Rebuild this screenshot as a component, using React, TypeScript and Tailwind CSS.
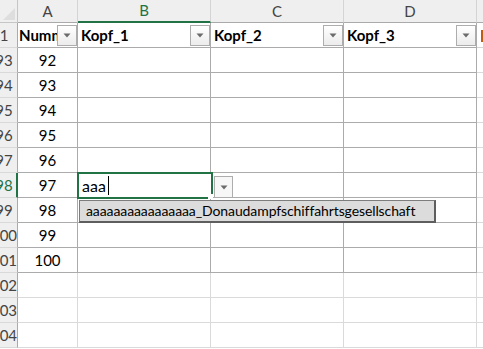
import React from 'react';

const cols = [
  { key: 'A', w: 'w-[60px]' },
  { key: 'B', w: 'w-[133px]' },
  { key: 'C', w: 'w-[133px]' },
  { key: 'D', w: 'w-[133px]' },
];

const rows = [
  { label: '93', val: '92' },
  { label: '94', val: '93' },
  { label: '95', val: '94' },
  { label: '96', val: '95' },
  { label: '97', val: '96' },
  { label: '98', val: '97' },
  { label: '99', val: '98' },
  { label: '100', val: '99' },
  { label: '101', val: '100' },
  { label: '102', val: '' },
  { label: '103', val: '' },
  { label: '104', val: '' },
];

const Caret = () => (
  <svg width="8" height="5" viewBox="0 0 8 5">
    <path d="M0.5 0.5 L7.5 0.5 L4 4.5 Z" fill="#6b6b6b" />
  </svg>
);

const FilterButton = () => (
  <div className="absolute right-0 top-[2px] w-[20px] h-[21px] border border-[#adadad] bg-gradient-to-b from-white to-[#ececec] flex items-center justify-center">
    <Caret />
  </div>
);

const RowHead = ({ label, active }: { label: string; active?: boolean }) => (
  <div
    className={
      'w-[18px] shrink-0 overflow-hidden flex items-center bg-[#efefef] border-b border-[#d9d9d9] ' +
      (active ? 'border-r-2 border-r-[#217346] text-[#217346] bg-[#e2e2e2]' : 'border-r border-r-[#aaaaaa] text-[#444]')
    }
  >
    <div className="w-[28px] shrink-0 ml-[-10px] text-center">{label}</div>
  </div>
);

export default function App() {
  return (
    <div
      className="relative w-[483px] h-[349px] overflow-hidden bg-white text-[15px] leading-none text-black"
      style={{ fontFamily: 'Lato, "Liberation Sans", sans-serif' }}
    >
      {/* column headers */}
      <div className="flex h-[23px]">
        <div className="w-[18px] shrink-0 bg-[#efefef] border-r border-b border-[#c6c6c6] relative overflow-hidden">
          <svg className="absolute right-[2px] bottom-[2px]" width="12" height="12" viewBox="0 0 12 12">
            <path d="M12 0 L12 12 L0 12 Z" fill="#dedede" />
          </svg>
        </div>
        {cols.map((c) => (
          <div
            key={c.key}
            className={
              c.w +
              ' shrink-0 bg-[#efefef] border-r border-r-[#d4d4d4] flex items-center justify-center ' +
              (c.key === 'B'
                ? 'border-b-2 border-b-[#217346] text-[#217346] bg-[#e4e4e4]'
                : 'border-b border-b-[#aaaaaa] text-[#444]')
            }
          >
            {c.key}
          </div>
        ))}
        <div className="flex-1 bg-[#efefef] border-b border-[#aaaaaa]" />
      </div>

      {/* table header row */}
      <div className="flex h-[25px]">
        <RowHead label="1" />
        {[
          { w: 'w-[60px]', t: 'Nummer', pl: 'pl-[1px]' },
          { w: 'w-[133px]', t: 'Kopf_1', pl: 'pl-[3px]' },
          { w: 'w-[133px]', t: 'Kopf_2', pl: 'pl-[3px]' },
          { w: 'w-[133px]', t: 'Kopf_3', pl: 'pl-[3px]' },
        ].map((h) => (
          <div
            key={h.t}
            className={h.w + ' shrink-0 relative border-r border-b border-[#ababab] font-bold flex items-center overflow-hidden ' + h.pl}
          >
            <span className="whitespace-nowrap">{h.t}</span>
            <FilterButton />
          </div>
        ))}
        <div className="flex-1 border-b border-[#d4d4d4] relative">
          <div className="absolute left-[4px] top-[7px] w-[3px] h-[12px] bg-[#c55a11]" />
        </div>
      </div>

      {/* data rows */}
      {rows.map((r, i) => {
        const inTable = i < 9;
        const line = inTable ? 'border-[#ababab]' : 'border-[#dadada]';
        return (
          <div key={r.label} className="flex h-[25px]">
            <RowHead label={r.label} active={r.label === '98'} />
            {cols.map((c) => (
              <div
                key={c.key}
                className={c.w + ' shrink-0 border-r border-b flex items-center justify-center ' + line}
              >
                {c.key === 'A' ? r.val : ''}
              </div>
            ))}
            <div className="flex-1 border-b border-[#dadada]" />
          </div>
        );
      })}

      {/* active cell editor */}
      <div className="absolute left-[77px] top-[172px] w-[136px] h-[27px] border-2 border-[#217346] bg-white flex items-center pl-[3px]">
        <span className="text-[16px]">aaa</span>
        <span className="w-px h-[19px] bg-black ml-[2px]" />
        <div className="absolute right-[-2px] bottom-[-2px] w-[5px] h-[5px] bg-white" />
      </div>

      {/* data validation dropdown button */}
      <div className="absolute left-[214px] top-[176px] w-[19px] h-[22px] border border-[#adadad] bg-[#f7f7f7] flex items-center justify-center">
        <Caret />
      </div>

      {/* autocomplete list */}
      <div className="absolute left-[79px] top-[200px] w-[357px] h-[23px] bg-[#dcdcdc] border border-[#7d7d7d] border-r-2 border-b-2 border-r-[#5e5e5e] border-b-[#5e5e5e] flex items-center pl-[6px]">
        <span className="whitespace-nowrap text-[14px] tracking-[-0.1px]">aaaaaaaaaaaaaaaa_Donaudampfschiffahrtsgesellschaft</span>
      </div>
    </div>
  );
}
